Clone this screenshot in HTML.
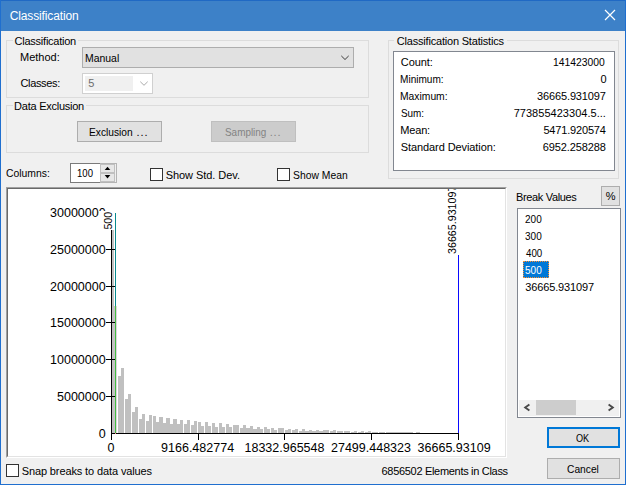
<!DOCTYPE html>
<html><head><meta charset="utf-8">
<style>
*{box-sizing:border-box;margin:0;padding:0}
html,body{width:626px;height:485px;overflow:hidden;background:#f0f0f0}
body{position:relative;font-family:"Liberation Sans",sans-serif;font-size:11px;color:#000}
.a{position:absolute;white-space:nowrap}
.t{position:absolute;white-space:pre;line-height:13px;height:13px}
.grp{position:absolute;border:1px solid #dcdcdc}
.lbl{position:absolute;background:#f0f0f0;height:13px}
.cb{position:absolute;width:13px;height:13px;background:#fff;border:1px solid #333}
.btn{position:absolute;background:#e1e1e1;border:1px solid #adadad}
</style></head><body>
<!-- window frame -->
<div class="a" style="left:0;top:0;width:626px;height:31px;background:#3d81c8"></div>
<div class="a" style="left:0;top:0;width:626px;height:1px;background:#2069c4"></div>
<div class="a" style="left:0;top:0;width:1px;height:485px;background:#1f6fcf"></div>
<div class="a" style="left:625px;top:0;width:1px;height:485px;background:#1f6fcf"></div>
<div class="a" style="left:0;top:484px;width:626px;height:1px;background:#1f6fcf"></div>
<svg class="a" style="left:604px;top:9px" width="12" height="12"><path d="M1 1L11 11M11 1L1 11" stroke="#fff" stroke-width="1.2" fill="none"/></svg>

<!-- group: Classification -->
<div class="grp" style="left:6px;top:40px;width:363px;height:58px"></div>
<div class="lbl" style="left:13px;top:35px;width:65px"></div>
<div class="btn" style="left:82px;top:47px;width:272px;height:21px"></div>
<svg class="a" style="left:340px;top:54px" width="11" height="8"><path d="M1.3 1.9L5 5.5L8.7 1.9" stroke="#3c3c3c" stroke-width="1" fill="none"/></svg>
<div class="a" style="left:82px;top:73px;width:71px;height:21px;background:#fff;border:1px solid #d0d0d0"></div>
<div class="a" style="left:85px;top:76px;width:48px;height:15px;background:#f0f0f0"></div>
<svg class="a" style="left:139px;top:80px" width="11" height="8"><path d="M1.3 1.7L5 5.3L8.7 1.7" stroke="#ababab" stroke-width="1" fill="none"/></svg>

<!-- group: Data Exclusion -->
<div class="grp" style="left:6px;top:105px;width:363px;height:48px"></div>
<div class="lbl" style="left:13px;top:100px;width:73px"></div>
<div class="btn" style="left:77px;top:121px;width:85px;height:21px"></div>
<div class="btn" style="left:211px;top:121px;width:85px;height:21px;background:#cccccc;border-color:#bfbfbf"></div>

<!-- Columns row -->
<div class="a" style="left:70px;top:163px;width:47px;height:20px;background:#fff;border:1px solid #7a7a7a"></div>
<div class="a" style="left:100px;top:163px;width:17px;height:20px;background:#f0f0f0;border:1px solid #b4b4b4;border-left:none"></div>
<div class="a" style="left:100px;top:164px;width:15px;height:9px;background:#e7e7e7;border:1px solid #c0c0c0"></div>
<div class="a" style="left:100px;top:173px;width:15px;height:9px;background:#e7e7e7;border:1px solid #c0c0c0"></div>
<svg class="a" style="left:105px;top:167px;overflow:visible" width="6" height="4"><path d="M-0.3 3.1L2.5 -0.2L5.3 3.1Z" fill="#000"/></svg>
<svg class="a" style="left:105px;top:175px;overflow:visible" width="6" height="4"><path d="M-0.3 0.1L2.5 3.4L5.3 0.1Z" fill="#000"/></svg>
<div class="cb" style="left:150px;top:168px"></div>
<div class="cb" style="left:277px;top:168px"></div>

<!-- group: Classification Statistics -->
<div class="grp" style="left:388px;top:40px;width:231px;height:139px"></div>
<div class="lbl" style="left:394px;top:35px;width:113px"></div>
<div class="a" style="left:393px;top:51px;width:222px;height:120px;background:#fff;border:1px solid #828790"></div>

<!-- chart frame -->
<div class="a" style="left:6px;top:187px;width:501px;height:271px;background:#fff;border-top:1px solid #a0a0a0;border-left:1px solid #a0a0a0;border-right:1px solid #fff;border-bottom:1px solid #fff"></div>
<div class="a" style="left:7px;top:188px;width:499px;height:269px;background:#fff;border-top:1px solid #696969;border-left:1px solid #696969;border-right:1px solid #e3e3e3;border-bottom:1px solid #e3e3e3"></div>
<svg class="a" style="left:0;top:0" width="626" height="485" shape-rendering="crispEdges" font-family="Liberation Sans, sans-serif" font-size="12.5" fill="#000"><defs><clipPath id="cc"><rect x="8" y="189" width="497" height="267"/></clipPath></defs><g clip-path="url(#cc)"><rect x="112" y="230" width="2" height="203" fill="#c0c0c0"/><rect x="114" y="306" width="1" height="127" fill="#c9c0c9"/><rect x="116" y="306" width="1" height="127" fill="#ddd3dd"/><rect x="118" y="376" width="3" height="57" fill="#c0c0c0"/><rect x="121" y="368" width="4" height="65" fill="#c0c0c0"/><rect x="125" y="399" width="3" height="34" fill="#c0c0c0"/><rect x="128" y="394" width="4" height="39" fill="#c0c0c0"/><rect x="132" y="412" width="3" height="21" fill="#c0c0c0"/><rect x="135" y="407" width="4" height="26" fill="#c0c0c0"/><rect x="139" y="419" width="3" height="14" fill="#c0c0c0"/><rect x="142" y="414" width="4" height="19" fill="#c0c0c0"/><rect x="146" y="421" width="3" height="12" fill="#c0c0c0"/><rect x="149" y="415" width="4" height="18" fill="#c0c0c0"/><rect x="153" y="416" width="3" height="17" fill="#c0c0c0"/><rect x="156" y="422" width="3" height="11" fill="#c0c0c0"/><rect x="159" y="417" width="4" height="16" fill="#c0c0c0"/><rect x="163" y="423" width="3" height="10" fill="#c0c0c0"/><rect x="166" y="418" width="4" height="15" fill="#c0c0c0"/><rect x="170" y="424" width="3" height="9" fill="#c0c0c0"/><rect x="173" y="419" width="4" height="14" fill="#c0c0c0"/><rect x="177" y="424" width="3" height="9" fill="#c0c0c0"/><rect x="180" y="420" width="4" height="13" fill="#c0c0c0"/><rect x="184" y="424" width="3" height="9" fill="#c0c0c0"/><rect x="187" y="420" width="4" height="13" fill="#c0c0c0"/><rect x="191" y="425" width="3" height="8" fill="#c0c0c0"/><rect x="194" y="421" width="4" height="12" fill="#c0c0c0"/><rect x="198" y="422" width="3" height="11" fill="#c0c0c0"/><rect x="201" y="426" width="4" height="7" fill="#c0c0c0"/><rect x="205" y="422" width="3" height="11" fill="#c0c0c0"/><rect x="208" y="426" width="4" height="7" fill="#c0c0c0"/><rect x="212" y="423" width="3" height="10" fill="#c0c0c0"/><rect x="215" y="427" width="3" height="6" fill="#c0c0c0"/><rect x="218" y="423" width="4" height="10" fill="#c0c0c0"/><rect x="222" y="427" width="3" height="6" fill="#c0c0c0"/><rect x="225" y="424" width="4" height="9" fill="#c0c0c0"/><rect x="229" y="427" width="3" height="6" fill="#c0c0c0"/><rect x="232" y="425" width="4" height="8" fill="#c0c0c0"/><rect x="236" y="425" width="3" height="8" fill="#c0c0c0"/><rect x="239" y="428" width="4" height="5" fill="#c0c0c0"/><rect x="243" y="425" width="3" height="8" fill="#c0c0c0"/><rect x="246" y="428" width="4" height="5" fill="#c0c0c0"/><rect x="250" y="426" width="3" height="7" fill="#c0c0c0"/><rect x="253" y="429" width="4" height="4" fill="#c0c0c0"/><rect x="257" y="427" width="3" height="6" fill="#c0c0c0"/><rect x="260" y="429" width="4" height="4" fill="#c0c0c0"/><rect x="264" y="427" width="3" height="6" fill="#c0c0c0"/><rect x="267" y="429" width="4" height="4" fill="#c0c0c0"/><rect x="271" y="428" width="3" height="5" fill="#c0c0c0"/><rect x="274" y="430" width="3" height="3" fill="#c0c0c0"/><rect x="277" y="428" width="4" height="5" fill="#c0c0c0"/><rect x="281" y="428" width="3" height="5" fill="#c0c0c0"/><rect x="284" y="430" width="4" height="3" fill="#c0c0c0"/><rect x="288" y="429" width="3" height="4" fill="#c0c0c0"/><rect x="291" y="430" width="4" height="3" fill="#c0c0c0"/><rect x="295" y="429" width="3" height="4" fill="#c0c0c0"/><rect x="298" y="431" width="4" height="2" fill="#c0c0c0"/><rect x="302" y="429" width="3" height="4" fill="#c0c0c0"/><rect x="305" y="431" width="4" height="2" fill="#c0c0c0"/><rect x="309" y="430" width="3" height="3" fill="#c0c0c0"/><rect x="312" y="431" width="4" height="2" fill="#c0c0c0"/><rect x="316" y="430" width="3" height="3" fill="#c0c0c0"/><rect x="319" y="431" width="4" height="2" fill="#c0c0c0"/><rect x="323" y="430" width="3" height="3" fill="#c0c0c0"/><rect x="326" y="430" width="4" height="3" fill="#c0c0c0"/><rect x="330" y="431" width="3" height="2" fill="#c0c0c0"/><rect x="333" y="430" width="3" height="3" fill="#c0c0c0"/><rect x="336" y="431" width="4" height="2" fill="#c0c0c0"/><rect x="340" y="431" width="3" height="2" fill="#c0c0c0"/><rect x="343" y="431" width="4" height="2" fill="#c0c0c0"/><rect x="347" y="431" width="3" height="2" fill="#c0c0c0"/><rect x="350" y="432" width="4" height="1" fill="#c0c0c0"/><rect x="354" y="432" width="3" height="1" fill="#c0c0c0"/><rect x="357" y="432" width="4" height="1" fill="#c0c0c0"/><rect x="361" y="432" width="3" height="1" fill="#c0c0c0"/><rect x="364" y="432" width="4" height="1" fill="#c0c0c0"/><rect x="368" y="432" width="3" height="1" fill="#c0c0c0"/><rect x="371" y="432" width="4" height="1" fill="#c0c0c0"/><rect x="375" y="432" width="3" height="1" fill="#c0c0c0"/><rect x="378" y="432" width="4" height="1" fill="#c0c0c0"/><rect x="382" y="432" width="3" height="1" fill="#c0c0c0"/><rect x="385" y="432" width="4" height="1" fill="#c0c0c0"/><rect x="389" y="432" width="3" height="1" fill="#c0c0c0"/><rect x="392" y="432" width="3" height="1" fill="#c0c0c0"/><rect x="395" y="432" width="4" height="1" fill="#c0c0c0"/><rect x="399" y="432" width="3" height="1" fill="#c0c0c0"/><rect x="402" y="432" width="4" height="1" fill="#c0c0c0"/><rect x="406" y="432" width="3" height="1" fill="#c0c0c0"/><rect x="409" y="432" width="4" height="1" fill="#c0c0c0"/><rect x="416" y="432" width="4" height="1" fill="#c0c0c0"/><rect x="361" y="431" width="3" height="1" fill="#c6c6c6"/><rect x="368" y="431" width="3" height="1" fill="#c6c6c6"/><rect x="354" y="431" width="3" height="1" fill="#c6c6c6"/><rect x="124" y="360" width="1" height="73" fill="#fff"/><rect x="131" y="360" width="1" height="73" fill="#fff"/><rect x="138" y="360" width="1" height="73" fill="#fff"/><rect x="145" y="360" width="1" height="73" fill="#fff"/><rect x="152" y="360" width="1" height="73" fill="#fff"/><rect x="183" y="360" width="1" height="73" fill="#fff"/><rect x="190" y="360" width="1" height="73" fill="#fff"/><rect x="197" y="360" width="1" height="73" fill="#fff"/><rect x="204" y="360" width="1" height="73" fill="#fff"/><rect x="211" y="360" width="1" height="73" fill="#fff"/><rect x="218" y="360" width="1" height="73" fill="#fff"/><rect x="225" y="360" width="1" height="73" fill="#fff"/><rect x="232" y="360" width="1" height="73" fill="#fff"/><rect x="239" y="360" width="1" height="73" fill="#fff"/><rect x="263" y="360" width="1" height="73" fill="#fff"/><rect x="270" y="360" width="1" height="73" fill="#fff"/><rect x="277" y="360" width="1" height="73" fill="#fff"/><rect x="284" y="360" width="1" height="73" fill="#fff"/><rect x="291" y="360" width="1" height="73" fill="#fff"/><rect x="298" y="360" width="1" height="73" fill="#fff"/><rect x="329" y="360" width="1" height="73" fill="#fff"/><rect x="336" y="360" width="1" height="73" fill="#fff"/><rect x="343" y="360" width="1" height="73" fill="#fff"/><rect x="350" y="360" width="1" height="73" fill="#fff"/><rect x="357" y="360" width="1" height="73" fill="#fff"/><rect x="364" y="360" width="1" height="73" fill="#fff"/><rect x="371" y="360" width="1" height="73" fill="#fff"/><rect x="378" y="360" width="1" height="73" fill="#fff"/><rect x="385" y="360" width="1" height="73" fill="#fff"/><rect x="115" y="213" width="1" height="93" fill="#078a8f"/><rect x="115" y="306" width="1" height="127" fill="#3fbf3f"/><rect x="458" y="255" width="1" height="178" fill="#0a0aff"/><rect x="111" y="212" width="1" height="228" fill="#000"/><rect x="111" y="433" width="348" height="1" fill="#000"/><rect x="115" y="433" width="1" height="1" fill="#f08080"/><rect x="106" y="396" width="9" height="1" fill="#000"/><rect x="106" y="359" width="9" height="1" fill="#000"/><rect x="106" y="322" width="9" height="1" fill="#000"/><rect x="106" y="286" width="9" height="1" fill="#000"/><rect x="106" y="249" width="9" height="1" fill="#000"/><rect x="106" y="212" width="9" height="1" fill="#000"/><rect x="198" y="433" width="1" height="7" fill="#000"/><rect x="284" y="433" width="1" height="7" fill="#000"/><rect x="371" y="433" width="1" height="7" fill="#000"/><rect x="458" y="433" width="1" height="7" fill="#000"/><text x="105.7" y="216.5" text-anchor="end">30000000</text><text x="105.7" y="253.5" text-anchor="end">25000000</text><text x="105.7" y="290.5" text-anchor="end">20000000</text><text x="105.7" y="326.5" text-anchor="end">15000000</text><text x="105.7" y="363.5" text-anchor="end">10000000</text><text x="105.7" y="400.5" text-anchor="end">5000000</text><text x="105.7" y="437.5" text-anchor="end">0</text><text x="111" y="451.8" text-anchor="middle">0</text><text x="197.6" y="451.8" text-anchor="middle">9166.482774</text><text x="284.5" y="451.8" text-anchor="middle">18332.965548</text><text x="371" y="451.8" text-anchor="middle">27499.448323</text><text x="417.6" y="451.8">36665.93109</text><rect x="99" y="211" width="16" height="19" fill="#fff"/><text transform="translate(111.8,229.6) rotate(-90)" font-size="10.7">500</text><text transform="translate(455.5,254) rotate(-90)" font-size="10.7">36665.931097</text></g></svg>

<!-- Break values -->
<div class="btn" style="left:601px;top:186px;width:19px;height:20px"></div>
<div class="a" style="left:517px;top:208px;width:104px;height:210px;background:#fff;border:1px solid #828790"></div>
<div class="a" style="left:523px;top:261px;width:26px;height:17px;background:#0078d7;border:1px dotted #ff9030"></div>
<div class="a" style="left:519px;top:400px;width:100px;height:16px;background:#f0f0f0"></div>
<div class="a" style="left:536px;top:400px;width:40px;height:15px;background:#cdcdcd"></div>
<svg class="a" style="left:520px;top:400px" width="100" height="16"><path d="M9.4 4.5L5.2 7.5L9.4 10.5M88.6 4.5L92.8 7.5L88.6 10.5" stroke="#484848" stroke-width="1.9" fill="none"/></svg>

<!-- buttons -->
<div class="btn" style="left:547px;top:427px;width:73px;height:21px;border:2px solid #0078d7"></div>
<div class="btn" style="left:547px;top:458px;width:73px;height:21px"></div>

<!-- bottom -->
<div class="cb" style="left:6px;top:464px"></div>
<!-- texts -->
<div class="t" style="left:9.70px;top:10px;font-size:12px;color:#fff;letter-spacing:-0.131px;">Classification</div>
<div class="t" style="left:14.60px;top:35px;font-size:11px;color:#000;letter-spacing:-0.246px;">Classification</div>
<div class="t" style="left:20.00px;top:51px;font-size:11px;color:#000;letter-spacing:0.008px;">Method:</div>
<div class="t" style="left:20.50px;top:77px;font-size:11px;color:#000;letter-spacing:-0.350px;">Classes:</div>
<div class="t" style="left:85.20px;top:52px;font-size:11px;color:#000;transform:scaleX(0.9480);transform-origin:0.50px 50%;">Manual</div>
<div class="t" style="left:88.20px;top:77px;font-size:11px;color:#6d6d6d;">5</div>
<div class="t" style="left:14.10px;top:100px;font-size:11px;color:#000;letter-spacing:-0.250px;">Data Exclusion</div>
<div class="t" style="left:89.00px;top:126px;font-size:11px;color:#000;transform:scaleX(0.9259);transform-origin:0.50px 50%;">Exclusion</div>
<div class="t" style="left:136.60px;top:126px;font-size:11px;color:#000;letter-spacing:0.925px;">...</div>
<div class="t" style="left:224.50px;top:126px;font-size:11px;color:#838383;transform:scaleX(0.9012);transform-origin:0.00px 50%;">Sampling</div>
<div class="t" style="left:269.70px;top:126px;font-size:11px;color:#838383;letter-spacing:0.825px;">...</div>
<div class="t" style="left:5.80px;top:167px;font-size:11px;color:#000;transform:scaleX(0.9438);transform-origin:0.00px 50%;">Columns:</div>
<div class="t" style="left:76.85px;top:167px;font-size:11px;color:#000;transform:scaleX(0.8679);transform-origin:0.25px 50%;">100</div>
<div class="t" style="left:165.70px;top:169px;font-size:11px;color:#000;letter-spacing:-0.054px;">Show Std. Dev.</div>
<div class="t" style="left:292.50px;top:169px;font-size:11px;color:#000;transform:scaleX(0.9417);transform-origin:0.00px 50%;">Show Mean</div>
<div class="t" style="left:396.80px;top:35px;font-size:11px;color:#000;letter-spacing:-0.196px;">Classification Statistics</div>
<div class="t" style="left:400.80px;top:56px;font-size:11px;color:#000;letter-spacing:-0.060px;">Count:</div>
<div class="t" style="left:400.30px;top:73px;font-size:11px;color:#000;transform:scaleX(0.9139);transform-origin:0.50px 50%;">Minimum:</div>
<div class="t" style="left:400.30px;top:90px;font-size:11px;color:#000;transform:scaleX(0.9371);transform-origin:0.50px 50%;">Maximum:</div>
<div class="t" style="left:400.80px;top:107px;font-size:11px;color:#000;transform:scaleX(0.9002);transform-origin:0.00px 50%;">Sum:</div>
<div class="t" style="left:400.30px;top:124px;font-size:11px;color:#000;letter-spacing:-0.175px;">Mean:</div>
<div class="t" style="left:400.80px;top:141px;font-size:11px;color:#000;letter-spacing:-0.092px;">Standard Deviation:</div>
<div class="t" style="left:553.45px;top:56px;font-size:11px;color:#000;transform:scaleX(0.9403);transform-origin:0.25px 50%;">141423000</div>
<div class="t" style="left:600.50px;top:73px;font-size:11px;color:#000;">0</div>
<div class="t" style="left:537.10px;top:90px;font-size:11px;color:#000;letter-spacing:-0.141px;">36665.931097</div>
<div class="t" style="left:513.70px;top:107px;font-size:11px;color:#000;letter-spacing:0.028px;">773855423304.5...</div>
<div class="t" style="left:543.40px;top:124px;font-size:11px;color:#000;letter-spacing:-0.170px;">5471.920574</div>
<div class="t" style="left:542.70px;top:141px;font-size:11px;color:#000;letter-spacing:-0.115px;">6952.258288</div>
<div class="t" style="left:515.90px;top:191px;font-size:11px;color:#000;letter-spacing:-0.332px;">Break Values</div>
<div class="t" style="left:605.70px;top:190px;font-size:11px;color:#000;">%</div>
<div class="t" style="left:525.30px;top:213px;font-size:11px;color:#000;transform:scaleX(0.9096);transform-origin:0.00px 50%;">200</div>
<div class="t" style="left:525.30px;top:230px;font-size:11px;color:#000;transform:scaleX(0.9096);transform-origin:0.00px 50%;">300</div>
<div class="t" style="left:525.80px;top:247px;font-size:11px;color:#000;transform:scaleX(0.8845);transform-origin:-0.25px 50%;">400</div>
<div class="t" style="left:525.30px;top:264px;font-size:11px;color:#fff;transform:scaleX(0.9096);transform-origin:0.00px 50%;">500</div>
<div class="t" style="left:525.30px;top:281px;font-size:11px;color:#000;letter-spacing:-0.141px;">36665.931097</div>
<div class="t" style="left:575.70px;top:432px;font-size:11px;color:#000;transform:scaleX(0.8278);transform-origin:0.00px 50%;">OK</div>
<div class="t" style="left:566.60px;top:463px;font-size:11px;color:#000;transform:scaleX(0.9300);transform-origin:0.00px 50%;">Cancel</div>
<div class="t" style="left:21.70px;top:465px;font-size:11px;color:#000;letter-spacing:-0.116px;">Snap breaks to data values</div>
<div class="t" style="left:381.50px;top:465px;font-size:11px;color:#000;letter-spacing:-0.304px;">6856502 Elements in Class</div>
</body></html>
